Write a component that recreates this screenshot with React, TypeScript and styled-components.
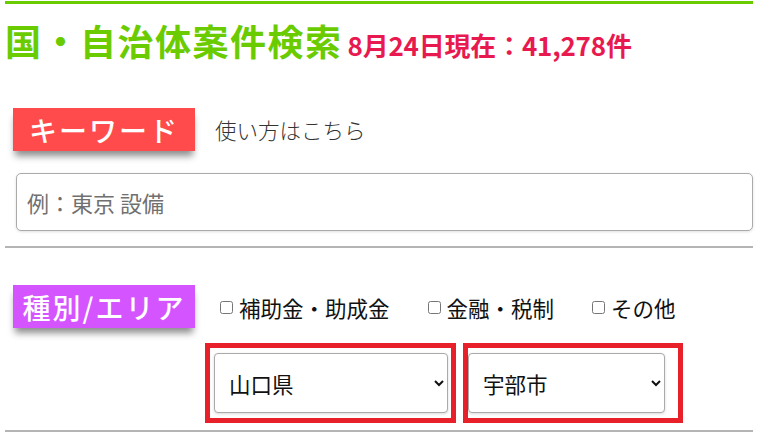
import React from "react";
import styled, { createGlobalStyle } from "styled-components";

const GlobalStyle = createGlobalStyle`
  body {
    margin: 0;
    background: #ffffff;
    font-family: "Noto Sans CJK JP", "Noto Sans", sans-serif;
  }
`;

const Page = styled.div`
  width: 748px;
  margin: 1px 0 0 5px;
  border-top: 3px solid #6acc00;
`;

const TitleRow = styled.div`
  display: flex;
  align-items: baseline;
  padding-top: 18px;
  height: 50px;
`;

const Title = styled.h1`
  margin: 0;
  font-size: 36px;
  font-weight: 700;
  letter-spacing: 1.5px;
  color: #6acc00;
  line-height: 1;
`;

const Count = styled.span`
  font-size: 26px;
  font-weight: 700;
  color: #e8194f;
  margin-left: 5px;
  letter-spacing: -0.2px;
`;

const Section = styled.section<{ $padBottom: number }>`
  padding: 36px 0 ${(p) => p.$padBottom}px;
  border-bottom: 2px solid #b4b4b4;
`;

const Badge = styled.div<{ $bg: string }>`
  flex: none;
  width: 182px;
  height: 43px;
  margin-left: 8px;
  display: flex;
  align-items: center;
  justify-content: center;
  background: ${(p) => p.$bg};
  color: #ffffff;
  font-size: 28px;
  font-weight: 500;
  letter-spacing: 2px;
  box-shadow: 0 7px 7px -2px rgba(0, 0, 0, 0.45);
`;

const HeadRow = styled.div`
  display: flex;
  align-items: center;
`;

const HelpLink = styled.span`
  margin-left: 20px;
  font-size: 21.5px;
  font-weight: 300;
  color: #333333;
`;

const KeywordInput = styled.input`
  display: block;
  box-sizing: border-box;
  width: 737px;
  height: 58px;
  margin: 22px 0 0 11px;
  padding: 0 10px;
  border: 1px solid #aaaaaa;
  border-radius: 5px;
  box-shadow: 0 1px 3px rgba(0, 0, 0, 0.12);
  font-family: inherit;
  font-size: 22px;
  color: #333333;
  &::placeholder {
    color: #707070;
  }
`;

const AreaBody = styled.div`
  display: flex;
  align-items: flex-start;
  padding-top: 1px;
`;

const RightCol = styled.div`
  margin-left: 10px;
`;

const CheckRow = styled.div`
  display: flex;
  gap: 38px;
  padding: 4px 0 0 15px;
  height: 54px;
`;

const CheckLabel = styled.label`
  display: flex;
  align-items: center;
  height: 36px;
  font-size: 21.5px;
  color: #111111;
`;

const Check = styled.input`
  width: 13px;
  height: 13px;
  margin: 0 6px 0 0;
`;

const SelectRow = styled.div`
  display: flex;
  gap: 7px;
`;

const Marker = styled.div<{ $w: number; $padL: number; $padR: number }>`
  box-sizing: border-box;
  width: ${(p) => p.$w}px;
  height: 80px;
  border: 5px solid #e8202a;
  padding: 5px ${(p) => p.$padR}px 5px ${(p) => p.$padL}px;
`;

const Select = styled.select`
  width: 100%;
  height: 100%;
  box-sizing: border-box;
  padding: 0 10px;
  border: 1px solid #aaaaaa;
  border-radius: 4px;
  background: #ffffff;
  box-shadow: 0 1px 3px rgba(0, 0, 0, 0.15);
  font-family: inherit;
  font-size: 21.5px;
  color: #111111;
`;

export default function App() {
  return (
    <>
      <GlobalStyle />
      <Page>
        <TitleRow>
          <Title>国・自治体案件検索</Title>
          <Count>8月24日現在：41,278件</Count>
        </TitleRow>
        <Section $padBottom={15}>
          <HeadRow>
            <Badge $bg="#ff4b4b">キーワード</Badge>
            <HelpLink>使い方はこちら</HelpLink>
          </HeadRow>
          <KeywordInput placeholder="例：東京 設備" />
        </Section>
        <Section $padBottom={7}>
          <AreaBody>
            <Badge $bg="#d455ff">種別/エリア</Badge>
            <RightCol>
              <CheckRow>
                <CheckLabel>
                  <Check type="checkbox" />
                  補助金・助成金
                </CheckLabel>
                <CheckLabel>
                  <Check type="checkbox" />
                  金融・税制
                </CheckLabel>
                <CheckLabel>
                  <Check type="checkbox" />
                  その他
                </CheckLabel>
              </CheckRow>
              <SelectRow>
                <Marker $w={251} $padL={4} $padR={3}>
                  <Select defaultValue="yamaguchi">
                    <option value="yamaguchi">山口県</option>
                  </Select>
                </Marker>
                <Marker $w={220} $padL={0} $padR={13}>
                  <Select defaultValue="ube">
                    <option value="ube">宇部市</option>
                  </Select>
                </Marker>
              </SelectRow>
            </RightCol>
          </AreaBody>
        </Section>
      </Page>
    </>
  );
}
